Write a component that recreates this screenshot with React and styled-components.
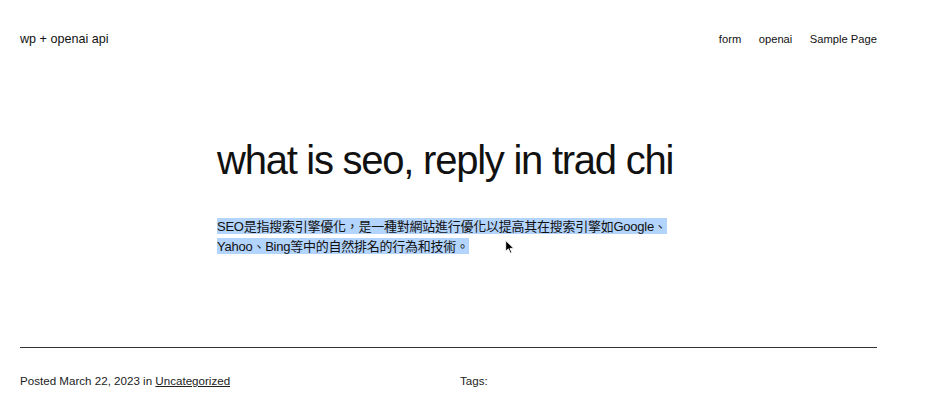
import React from "react";
import styled, { createGlobalStyle } from "styled-components";

const Global = createGlobalStyle`
  html, body { margin: 0; padding: 0; background: #fff; }
  body { font-family: "Liberation Sans", "Noto Sans CJK TC", sans-serif; color: #111; overflow: hidden; }
`;

const Page = styled.div`
  width: 939px;
  height: 394px;
  box-sizing: border-box;
  padding: 0 62px 0 20px;
  position: relative;
  overflow: hidden;
`;

const Header = styled.header`
  display: flex;
  justify-content: space-between;
  align-items: center;
  height: 77px;
`;

const SiteTitle = styled.div`
  font-size: 12.6px;
`;

const Nav = styled.nav`
  display: flex;
  gap: 17.5px;
`;

const NavLink = styled.span`
  font-size: 11.2px;
`;

const Main = styled.main`
  width: 463px;
  margin: 0 auto;
  padding-top: 55px;
`;

const Title = styled.h1`
  margin: 0;
  font-weight: 400;
  font-size: 40px;
  line-height: 56px;
  letter-spacing: -1.25px;
  white-space: nowrap;
`;

const Para = styled.p`
  margin: 29px 0 0;
  font-size: 13px;
  line-height: 20px;
  letter-spacing: -0.25px;
`;

const Selected = styled.span`
  background: #b3d4fc;
  padding: 1px 0 0;
`;

const Divider = styled.hr`
  margin: 90px 0 0;
  border: 0;
  border-top: 1.5px solid #333;
`;

const Meta = styled.div`
  display: grid;
  grid-template-columns: 440px 1fr;
  padding-top: 26px;
  font-size: 11.6px;
  color: #222;
`;

const MetaLink = styled.span`
  text-decoration: underline;
`;

const Cursor = styled.svg`
  position: absolute;
  left: 505px;
  top: 240px;
`;

export default function App() {
  return (
    <>
      <Global />
      <Page>
        <Header>
          <SiteTitle>wp + openai api</SiteTitle>
          <Nav>
            <NavLink>form</NavLink>
            <NavLink>openai</NavLink>
            <NavLink>Sample Page</NavLink>
          </Nav>
        </Header>
        <Main>
          <Title>what is seo, reply in trad chi</Title>
          <Para>
            <Selected>
              SEO是指搜索引擎優化，是一種對網站進行優化以提高其在搜索引擎如Google、Yahoo、Bing等中的自然排名的行為和技術。
            </Selected>
          </Para>
        </Main>
        <Divider />
        <Meta>
          <div>
            Posted March 22, 2023 in <MetaLink>Uncategorized</MetaLink>
          </div>
          <div>Tags:</div>
        </Meta>
        <Cursor width="10" height="14" viewBox="0 0 9 13">
          <path d="M0.5 0.5 L0.5 10.5 L3 8.2 L4.8 12.2 L6.2 11.6 L4.5 7.8 L8 7.8 Z" fill="#000" stroke="#fff" strokeWidth="0.8" />
        </Cursor>
      </Page>
    </>
  );
}
